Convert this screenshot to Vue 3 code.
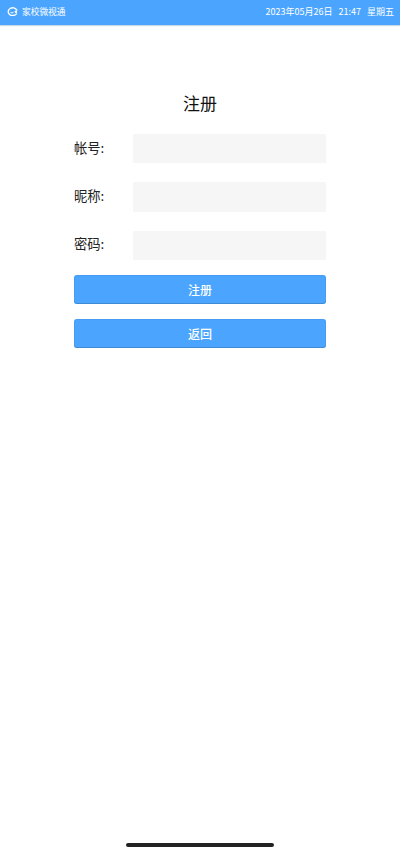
<script setup>
const fields = [
  { label: '帐号:' },
  { label: '昵称:' },
  { label: '密码:' }
]
const buttons = ['注册', '返回']
</script>

<template>
  <div class="page">
    <header class="status">
      <div class="brand">
        <svg class="logo" viewBox="0 0 12 10" width="11" height="9" aria-hidden="true">
          <path d="M10.4 7.6A5 4.3 0 1 1 10.8 3.4" fill="none" stroke="#fff" stroke-width="1.5" stroke-linecap="round"/>
          <path d="M3.6 5.4c.8 1.5 3 1.5 3.8 0" fill="none" stroke="#fff" stroke-width="1.1"/>
          <circle cx="9.8" cy="5.4" r="1.4" fill="#fff"/>
        </svg>
        <span class="app-name">家校微视通</span>
      </div>
      <div class="info">
        <span>2023年05月26日</span>
        <span>21:47</span>
        <span>星期五</span>
      </div>
    </header>

    <main class="form">
      <h1 class="title">注册</h1>
      <div class="fields">
        <div v-for="f in fields" :key="f.label" class="row">
          <label class="label">{{ f.label }}</label>
          <input class="input" type="text" />
        </div>
      </div>
      <div class="actions">
        <button v-for="b in buttons" :key="b" class="btn" type="button">{{ b }}</button>
      </div>
    </main>

    <div class="home-wrap">
      <div class="home"></div>
    </div>
  </div>
</template>

<style scoped>
.page {
  width: 400px;
  height: 853px;
  display: flex;
  flex-direction: column;
  background: #fff;
  overflow: hidden;
  font-family: "Noto Sans CJK SC", "Liberation Sans", sans-serif;
}
.status {
  height: 25px;
  flex: none;
  box-sizing: border-box;
  padding: 0 6px 2px 7px;
  display: flex;
  align-items: center;
  justify-content: space-between;
  background: #4ba5ff;
  color: #fff;
  font-size: 9px;
  line-height: 12px;
  box-shadow: 0 1px 1px rgba(40, 100, 170, 0.25);
}
.brand {
  display: flex;
  align-items: center;
  gap: 4px;
}
.app-name {
  font-size: 8.7px;
}
.logo {
  display: block;
}
.info {
  display: flex;
  align-items: baseline;
  gap: 6px;
}
.form {
  flex: 1;
  width: 252px;
  margin: 0 auto;
  display: flex;
  flex-direction: column;
}
.title {
  margin: 63px 0 0;
  height: 30px;
  line-height: 30px;
  text-align: center;
  font-size: 17px;
  font-weight: 400;
  color: #111;
}
.fields {
  margin-top: 16px;
  display: flex;
  flex-direction: column;
  gap: 19px;
}
.row {
  display: flex;
  align-items: center;
  justify-content: space-between;
  height: 29.3px;
}
.label {
  font-size: 13.3px;
  line-height: 20px;
  margin-top: -1.5px;
  color: #222;
}
.input {
  width: 193px;
  height: 29.3px;
  box-sizing: border-box;
  border: 0;
  padding: 0 8px;
  background: #f6f6f6;
  outline: none;
}
.actions {
  margin-top: 15px;
  display: flex;
  flex-direction: column;
  gap: 15px;
}
.btn {
  height: 29.3px;
  border: 0;
  border-radius: 3px;
  padding: 0;
  background: #4ba5ff;
  box-shadow: inset 0 -1px 0 rgba(50, 110, 170, 0.35), inset 0 0 0 1px rgba(50, 110, 170, 0.15);
  color: #fff;
  font-family: inherit;
  font-size: 12px;
  font-weight: 500;
}
.home-wrap {
  flex: none;
  height: 10px;
  display: flex;
  justify-content: center;
}
.home {
  width: 148px;
  height: 3.5px;
  border-radius: 2px;
  background: #222;
}
</style>
